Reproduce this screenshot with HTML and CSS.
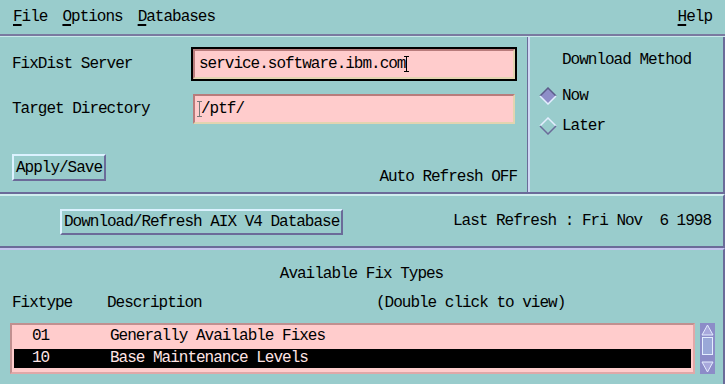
FILE: index.html
```
<!DOCTYPE html>
<html lang="en">
<head>
    <meta charset="UTF-8">
    <title>Fix Distribution Service</title>
    <link rel="stylesheet" href="styles.css">
</head>
<body>
    <div class="window">
        <div class="menubar">
            <span class="menu"><u>F</u>ile</span>
            <span class="menu"><u>O</u>ptions</span>
            <span class="menu"><u>D</u>atabases</span>
            <span class="menu help"><u>H</u>elp</span>
        </div>

        <div class="top">
            <div class="settings">
                <div class="field-row">
                    <span class="label">FixDist Server</span>
                    <div class="highlight focused">
                        <div class="field">service.software.ibm.com<span class="ibeam"></span></div>
                    </div>
                </div>
                <div class="field-row">
                    <span class="label">Target Directory</span>
                    <div class="highlight">
                        <div class="field"><span class="ibeam dim"></span>/ptf/</div>
                    </div>
                </div>
                <div class="action-row">
                    <button class="btn">Apply/Save</button>
                    <span class="status">Auto Refresh OFF</span>
                </div>
            </div>

            <div class="method">
                <div class="method-title">Download Method</div>
                <div class="radio">
                    <svg width="18" height="18" viewBox="0 0 18 18">
                        <polygon points="9,1 17,9 9,17 1,9" fill="#8e8ec8"/>
                        <polyline points="1,9 9,1 17,9" fill="none" stroke="#5c5c8a" stroke-width="1.5"/>
                        <polyline points="1,9 9,17 17,9" fill="none" stroke="#e4eeff" stroke-width="1.5"/>
                    </svg>
                    <span>Now</span>
                </div>
                <div class="radio">
                    <svg width="18" height="18" viewBox="0 0 18 18">
                        <polygon points="9,1 17,9 9,17 1,9" fill="#99cccc"/>
                        <polyline points="1,9 9,1 17,9" fill="none" stroke="#e4eeff" stroke-width="1.5"/>
                        <polyline points="1,9 9,17 17,9" fill="none" stroke="#6b6b99" stroke-width="1.5"/>
                    </svg>
                    <span>Later</span>
                </div>
            </div>
        </div>

        <div class="refresh">
            <button class="btn wide">Download/Refresh AIX V4 Database</button>
            <span class="last">Last Refresh : Fri Nov  6 1998</span>
        </div>

        <div class="fixtypes">
            <div class="fix-title">Available Fix Types</div>
            <div class="fix-head">
                <span class="col-type">Fixtype</span>
                <span class="col-desc">Description</span>
                <span class="col-hint">(Double click to view)</span>
            </div>
            <div class="list-wrap">
                <div class="list">
                    <div class="list-row">
                        <span class="cell-type">01</span>
                        <span>Generally Available Fixes</span>
                    </div>
                    <div class="list-row selected">
                        <span class="cell-type">10</span>
                        <span>Base Maintenance Levels</span>
                    </div>
                </div>
                <div class="scrollbar">
                    <svg width="15" height="51" viewBox="0 0 15 51">
                        <rect x="0" y="0" width="15" height="51" fill="#8c8cc8"/>
                        <polygon points="7.5,2 13,12 2,12" fill="#a8a8dc" stroke="#e4eeff" stroke-width="1"/>
                        <rect x="2.5" y="14.5" width="10" height="17" fill="#9aa8d8" stroke="#e4eeff" stroke-width="1"/>
                        <polygon points="2,39 13,39 7.5,49" fill="#a8a8dc" stroke="#e4eeff" stroke-width="1"/>
                    </svg>
                </div>
            </div>
        </div>
    </div>
</body>
</html>
```

FILE: styles.css
```
body {
    margin: 0;
    background: #99cccc;
}
.window {
    width: 725px;
    height: 384px;
    overflow: hidden;
    background: #99cccc;
    font-family: "Liberation Mono", monospace;
    font-size: 16px;
    letter-spacing: -1px;
    color: #000;
    white-space: nowrap;
}
.menubar {
    display: flex;
    align-items: center;
    height: 34px;
    padding: 0 13px;
    gap: 15px;
    border-bottom: 2px solid #7a7aa0;
}
.menu u {
    text-decoration-thickness: 2px;
    text-underline-offset: 3px;
}
.help {
    margin-left: auto;
}
.top {
    display: flex;
    height: 155px;
    border-top: 1px solid #c8eaea;
    border-bottom: 2px solid #6b6b99;
}
.settings {
    width: 528px;
    box-sizing: border-box;
    padding: 10px 10px 11px 12px;
    border-right: 1px solid #6b6b99;
    display: flex;
    flex-direction: column;
    gap: 11px;
}
.field-row {
    display: flex;
    align-items: center;
}
.label {
    width: 180px;
}
.highlight {
    border: 2px solid transparent;
}
.highlight.focused {
    border-color: #000;
}
.field {
    width: 310px;
    height: 26px;
    line-height: 26px;
    padding: 0 4px;
    background: #ffcccc;
    border: 2px solid;
    border-color: #b87c7c #e2d4b0 #e2d4b0 #b87c7c;
}
.ibeam {
    display: inline-block;
    width: 1px;
    height: 16px;
    margin: 0 3px 0 1px;
    vertical-align: middle;
    background: #000;
    position: relative;
}
.ibeam::before,
.ibeam::after {
    content: "";
    position: absolute;
    left: -2px;
    width: 5px;
    height: 1px;
    background: inherit;
}
.ibeam::before {
    top: 0;
}
.ibeam::after {
    bottom: 0;
}
.ibeam.dim {
    background: #777;
    margin: 0 1px 0 0;
}
.action-row {
    margin-top: auto;
    display: flex;
    justify-content: space-between;
    align-items: flex-end;
}
.status {
    margin-bottom: -5px;
}
.btn {
    font: inherit;
    letter-spacing: inherit;
    color: inherit;
    background: #99cccc;
    height: 27px;
    padding: 0 2px;
    border: 2px solid;
    border-color: #dcf2ff #6b6b99 #6b6b99 #dcf2ff;
}
.method {
    flex: 1;
    border-left: 2px solid #d0d8f4;
    border-right: 2px solid #6b6b99;
    padding-top: 14px;
}
.method-title {
    text-align: center;
    margin-bottom: 17px;
}
.radio {
    display: flex;
    align-items: center;
    gap: 5px;
    padding-left: 9px;
    height: 20px;
    margin-bottom: 10px;
}
.refresh {
    display: flex;
    align-items: center;
    justify-content: space-between;
    height: 50px;
    padding: 0 12px 0 60px;
    border-top: 2px solid #d0eeee;
    border-bottom: 2px solid #6b6b99;
    border-right: 2px solid #6b6b99;
}
.last {
    white-space: pre;
}
.btn.wide {
    height: 26px;
    margin-top: 2px;
}
.fixtypes {
    border-top: 2px solid #c4c4ee;
    border-right: 2px solid #6b6b99;
    height: 140px;
}
.fix-title {
    text-align: center;
    padding-top: 15px;
    height: 20px;
}
.fix-head {
    display: flex;
    height: 20px;
    margin-top: 9px;
    padding-left: 12px;
}
.col-type {
    width: 95px;
}
.col-desc {
    width: 269px;
}
.list-wrap {
    display: flex;
    gap: 5px;
    margin: 9px 0 0 10px;
}
.list {
    width: 681px;
    height: 45px;
    background: #ffcccc;
    border: 2px solid;
    border-color: #c09090 #e0a8a8 #e0a8a8 #c09090;
    padding-top: 2px;
}
.list-row {
    display: flex;
    height: 19px;
    line-height: 19px;
    margin: 0 2px 3px 2px;
    padding-left: 18px;
}
.cell-type {
    width: 78px;
}
.selected {
    background: #000;
    color: #ffe4e4;
}
.scrollbar {
    display: flex;
}
```
